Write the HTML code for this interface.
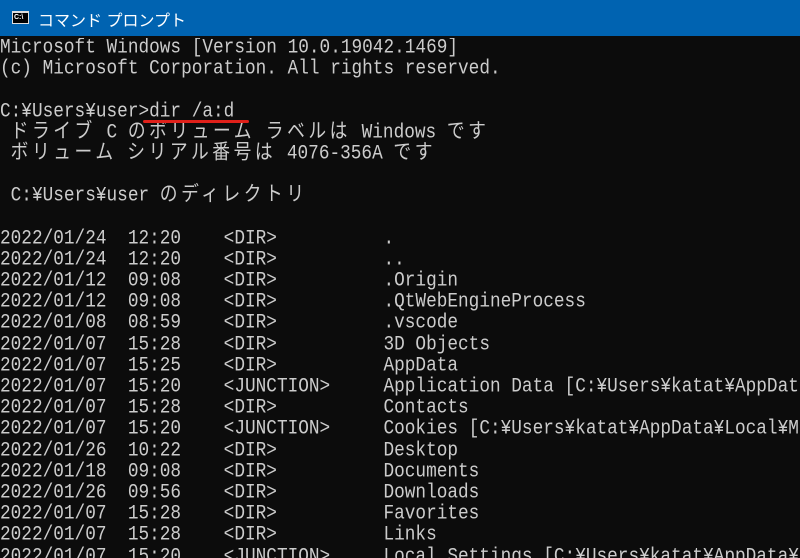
<!DOCTYPE html>
<html><head><meta charset="utf-8"><style>
html,body{margin:0;padding:0;width:800px;height:558px;overflow:hidden;background:#0c0c0c}
.tb{position:absolute;left:0;top:0;width:800px;height:36px;background:#0063b1}
.ic{position:absolute;left:12px;top:11px;width:17px;height:13px;background:#000;border:1px solid #ddd;border-top-width:2px;box-sizing:border-box;color:#fff;font:bold 7px "Liberation Sans",sans-serif;line-height:9px;padding-left:1px}
.tt{position:absolute;left:38px;top:7px;color:#fff;font:16px "Liberation Sans","Noto Sans CJK JP",sans-serif}
.c{position:absolute;left:0;top:38px;width:800px;height:520px;overflow:hidden;color:#cccccc;font:17.75px "Liberation Mono",monospace}
.c div{white-space:pre;height:21.2px;line-height:21.2px;overflow:visible;transform:scaleY(1.15);transform-origin:0 50%}
.j{letter-spacing:3.55px;font-family:"Noto Sans CJK JP",sans-serif;line-height:0}
.ul{position:absolute;left:143px;top:120px;width:106px;height:3px;background:#e0201a;border-radius:2px}
</style></head><body>
<div class="tb"><div class="ic">C:\</div><div class="tt">コマンド プロンプト</div></div>
<div class="c"><div>Microsoft Windows [Version 10.0.19042.1469]</div><div>(c) Microsoft Corporation. All rights reserved.</div><div> </div><div>C:¥Users¥user&gt;dir /a:d</div><div> <span class="j">ドライブ</span> C <span class="j">のボリューム</span> <span class="j">ラベルは</span> Windows <span class="j">です</span></div><div> <span class="j">ボリューム</span> <span class="j">シリアル番号は</span> 4076-356A <span class="j">です</span></div><div> </div><div> C:¥Users¥user <span class="j">のディレクトリ</span></div><div> </div><div>2022/01/24  12:20    &lt;DIR&gt;          .</div><div>2022/01/24  12:20    &lt;DIR&gt;          ..</div><div>2022/01/12  09:08    &lt;DIR&gt;          .Origin</div><div>2022/01/12  09:08    &lt;DIR&gt;          .QtWebEngineProcess</div><div>2022/01/08  08:59    &lt;DIR&gt;          .vscode</div><div>2022/01/07  15:28    &lt;DIR&gt;          3D Objects</div><div>2022/01/07  15:25    &lt;DIR&gt;          AppData</div><div>2022/01/07  15:20    &lt;JUNCTION&gt;     Application Data [C:¥Users¥katat¥AppData</div><div>2022/01/07  15:28    &lt;DIR&gt;          Contacts</div><div>2022/01/07  15:20    &lt;JUNCTION&gt;     Cookies [C:¥Users¥katat¥AppData¥Local¥Mi</div><div>2022/01/26  10:22    &lt;DIR&gt;          Desktop</div><div>2022/01/18  09:08    &lt;DIR&gt;          Documents</div><div>2022/01/26  09:56    &lt;DIR&gt;          Downloads</div><div>2022/01/07  15:28    &lt;DIR&gt;          Favorites</div><div>2022/01/07  15:28    &lt;DIR&gt;          Links</div><div>2022/01/07  15:20    &lt;JUNCTION&gt;     Local Settings [C:¥Users¥katat¥AppData¥</div></div>
<div class="ul"></div>
</body></html>
